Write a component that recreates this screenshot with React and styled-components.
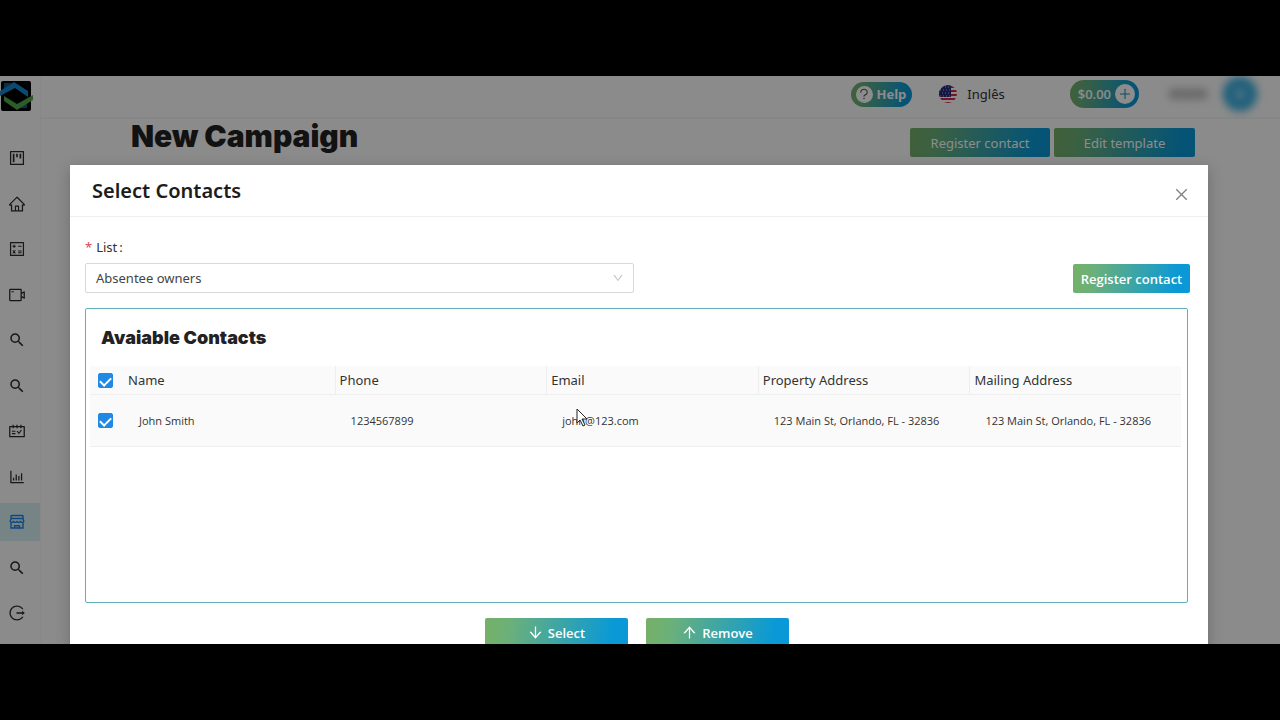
import { useState } from 'react'
import styled, { createGlobalStyle, css } from 'styled-components'
import {
	AiOutlineArrowDown,
	AiOutlineArrowUp,
	AiOutlineBarChart,
	AiOutlineCalculator,
	AiOutlineClose,
	AiOutlineDown,
	AiOutlineHome,
	AiOutlineLogout,
	AiOutlinePlus,
	AiOutlineProject,
	AiOutlineQuestion,
	AiOutlineSchedule,
	AiOutlineVideoCamera,
} from 'react-icons/ai'
import { MdSearch } from 'react-icons/md'

const GlobalStyle = createGlobalStyle`
	* {
		box-sizing: border-box;
	}
	body {
		margin: 0;
		background: #000;
		color: #333;
		font-family: 'Noto Sans', 'Open Sans', sans-serif;
		font-size: 13px;
		line-height: 20px;
	}
	button, select {
		font: inherit;
	}
	h1, h2, h3 {
		margin: 0;
	}
`

const gradient = css`
	background: linear-gradient(100deg, #76b067 0%, #6bb07a 18%, #0a99d6 88%);
`

const Frame = styled.div`
	display: flex;
	flex-direction: column;
	height: 100vh;
	padding: 76px 0;
`
const Screen = styled.div`
	position: relative;
	display: flex;
	flex: 1;
	min-height: 0;
	overflow: hidden;
	background: #fdfdfd;
`

const Sidebar = styled.aside`
	display: flex;
	flex-direction: column;
	width: 41px;
	padding: 4px 0 12px;
	border-right: 1px solid #f6f6f6;
`
const Logo = styled.svg`
	width: 34px;
	height: 32px;
	margin-bottom: 27px;
`
const Nav = styled.nav`
	display: flex;
	flex: 1;
	flex-direction: column;
	justify-content: space-between;
`
const NavLink = styled.a`
	display: flex;
	align-items: center;
	height: 38px;
	padding-left: 8px;
	font-size: 18px;
	color: ${({ $active }) => ($active ? '#1c84e8' : '#2b2b2b')};
	background: ${({ $active }) => ($active ? '#d8f1f4' : 'transparent')};
`

const Content = styled.div`
	flex: 1;
`
const TopBar = styled.header`
	display: flex;
	align-items: center;
	justify-content: flex-end;
	height: 43px;
	padding: 0 23px 5px 0;
	border-bottom: 2px solid #f5f5f5;
`
const Pill = styled.button`
	${gradient}
	display: flex;
	align-items: center;
	gap: 4px;
	height: ${({ $height }) => $height}px;
	padding: 0 ${({ $right }) => $right}px 0 ${({ $left }) => $left}px;
	border: 0;
	border-radius: 14px;
	color: #fff;
	font-family: 'Open Sans', sans-serif;
	font-weight: ${({ $weight }) => $weight};
`
const PillIcon = styled.span`
	display: grid;
	place-items: center;
	width: ${({ $size }) => $size}px;
	height: ${({ $size }) => $size}px;
	border-radius: 50%;
	background: #fff;
	color: ${({ $color }) => $color};
	font-size: 14px;
`
const Language = styled.div`
	display: flex;
	align-items: center;
	gap: 9px;
	margin: 0 65px 0 26px;
`
const User = styled.div`
	display: flex;
	align-items: center;
	gap: 16px;
	margin-left: 30px;
	filter: blur(4px);
`
const UserName = styled.span`
	width: 38px;
	height: 10px;
	background: #bbb;
`
const Avatar = styled.span`
	width: 34px;
	height: 34px;
	border-radius: 50%;
	background: radial-gradient(circle, #80cdec 12%, #2ca9dd 45%);
`
const PageHead = styled.div`
	display: flex;
	align-items: flex-start;
	justify-content: space-between;
	padding: 0 85px 0 90px;
`
const PageTitle = styled.h1`
	font-family: Inter, sans-serif;
	font-size: 30px;
	font-weight: 900;
	line-height: 34px;
	color: #222;
`
const ButtonRow = styled.div`
	display: flex;
	justify-content: ${({ $center }) => ($center ? 'center' : 'flex-end')};
	gap: ${({ $gap }) => $gap}px;
	padding-top: ${({ $top }) => $top}px;
`
const Button = styled.button`
	${gradient}
	display: flex;
	align-items: center;
	justify-content: center;
	gap: 4px;
	width: ${({ $width }) => $width}px;
	height: 29px;
	padding: 0;
	border: 0;
	border-radius: 2px;
	color: #fff;
	font-family: ${({ $light }) => ($light ? 'inherit' : "'Open Sans', sans-serif")};
	font-weight: ${({ $light }) => ($light ? 400 : 600)};
	white-space: nowrap;
	svg {
		font-size: 17px;
	}
`

const Mask = styled.div`
	position: absolute;
	inset: 0;
	padding: 89px 72px 0 70px;
	background: rgba(0, 0, 0, 0.45);
`
const Modal = styled.section`
	min-height: 100%;
	background: #fff;
	box-shadow: 0 4px 14px rgba(0, 0, 0, 0.22);
`
const ModalHead = styled.header`
	display: flex;
	align-items: center;
	justify-content: space-between;
	height: 52px;
	padding: 0 18px 0 22px;
	border-bottom: 1px solid #efefef;
`
const ModalTitle = styled.h2`
	font-size: 20px;
	font-weight: 600;
	line-height: 28px;
	color: #1c1c1c;
`
const CloseButton = styled.button`
	display: flex;
	padding: 8px 0 0;
	border: 0;
	background: none;
	color: #808080;
	font-size: 17px;
`
const ModalBody = styled.div`
	padding: 20px 20px 0 15px;
`
const FormRow = styled.div`
	display: flex;
	align-items: flex-end;
	justify-content: space-between;
	margin: 0 -2px 15px 0;
`
const Field = styled.div`
	width: 50%;
	max-width: 549px;
`
const Label = styled.label`
	display: block;
	margin-bottom: 6px;
	&::before {
		content: '*';
		margin-right: 4px;
		color: #d9485a;
	}
`
const Colon = styled.span`
	margin-left: 2px;
`
const SelectWrap = styled.div`
	display: grid;
	align-items: center;
	> * {
		grid-area: 1 / 1;
	}
	svg {
		justify-self: end;
		margin-right: 10px;
		color: #bbb;
		font-size: 12px;
		pointer-events: none;
	}
`
const Select = styled.select`
	appearance: none;
	width: 100%;
	height: 30px;
	padding: 0 10px;
	border: 1px solid #d9d9d9;
	border-radius: 2px;
	background: #fff;
	color: #444;
`
const Panel = styled.div`
	height: 295px;
	padding: 14px 6px 0 4px;
	border: 1px solid #5fb0bb;
	border-radius: 2px;
`
const PanelTitle = styled.h3`
	margin: 0 0 14px 11px;
	font-family: Inter, sans-serif;
	font-size: 18px;
	font-weight: 900;
	line-height: 29px;
	color: #222;
`
const Table = styled.table`
	width: 100%;
	table-layout: fixed;
	border-collapse: separate;
	border-spacing: 0;
	background: #fafafa;
`
const Th = styled.th`
	width: ${({ $width }) => $width || 'auto'};
	height: 29px;
	padding: 0 0 0 5px;
	border-bottom: 1px solid #efefef;
	text-align: left;
	font-weight: 400;
	color: #333;
	& + & + & {
		padding-left: 4px;
		border-left: 1px solid #eee;
	}
`
const Td = styled.td`
	height: 52px;
	padding: 0 0 0 ${({ $check }) => ($check ? 5 : 16)}px;
	border-bottom: 1px solid #efefef;
	font-family: 'Open Sans', sans-serif;
	font-size: 11px;
	white-space: nowrap;
`
const Checkbox = styled.input.attrs({ type: 'checkbox' })`
	appearance: none;
	display: block;
	width: 15px;
	height: 15px;
	margin: 0 0 0 3px;
	border: 1px solid #1f8ae6;
	border-radius: 2px;
	background: #fff;
	&:checked {
		background: #1f8ae6;
	}
	&:checked::after {
		content: '';
		display: block;
		width: 5px;
		height: 9px;
		margin: 1px auto;
		border: solid #fff;
		border-width: 0 2px 2px 0;
		transform: rotate(45deg);
	}
`
const Cursor = styled.svg`
	position: absolute;
	top: 332px;
	left: 576px;
	width: 12px;
	height: 19px;
	pointer-events: none;
`

const StoreIcon = () => (
	<svg width="18" height="18" viewBox="0 0 18 18" fill="none" stroke="currentColor" strokeWidth="1.4" aria-hidden="true">
		<rect x="3" y="2.5" width="12" height="3" rx="0.6" />
		<path d="M3 5.5L2.2 8.6c1 1 2.4 1 3.4 0 1 1 2.4 1 3.4 0 1 1 2.4 1 3.4 0 1 1 2.4 1 3.4 0L15 5.5" />
		<path d="M3 9.5V15h12V9.5M6.6 14.5v-1.7h4.8v1.7" />
	</svg>
)

const menu = [
	{ name: 'Dashboard', icon: AiOutlineProject },
	{ name: 'Home', icon: AiOutlineHome },
	{ name: 'Calculator', icon: AiOutlineCalculator },
	{ name: 'Videos', icon: AiOutlineVideoCamera },
	{ name: 'Search', icon: MdSearch },
	{ name: 'Search lists', icon: MdSearch },
	{ name: 'Schedule', icon: AiOutlineSchedule },
	{ name: 'Reports', icon: AiOutlineBarChart },
	{ name: 'Marketing', icon: StoreIcon, active: true },
	{ name: 'Search history', icon: MdSearch },
	{ name: 'Logout', icon: AiOutlineLogout },
]
const columns = ['Name', 'Phone', 'Email', 'Property Address', 'Mailing Address']
const contacts = [
	['John Smith', '1234567899', 'john@123.com', '123 Main St, Orlando, FL - 32836', '123 Main St, Orlando, FL - 32836'],
]

const BrandLogo = () => (
	<Logo viewBox="0 0 34 32" aria-hidden="true">
		<rect x="1" y="1" width="30" height="30" rx="2" fill="#000" />
		<path d="M4 3h8L4 9zM27 28h-8l8-6z" fill="#0e578b" />
		<path d="M0 16v-5L14 2l14 9v6L15 8z" fill="#1784cc" />
		<path d="M4 16l13 8 16-9v5L17 30 4 21z" fill="#51a94b" />
	</Logo>
)

const Flag = () => (
	<svg width="20" height="20" viewBox="0 0 20 20" aria-hidden="true">
		<clipPath id="round">
			<circle cx="10" cy="10" r="9" />
		</clipPath>
		<g clipPath="url(#round)">
			<path fill="#fff" d="M0 0h20v20H0z" />
			<path stroke="#d8283f" strokeWidth="2" d="M0 3h20M0 7h20M0 11h20M0 15h20M0 19h20" />
			<path fill="#272b78" d="M0 0h13v13H0z" />
			<path stroke="#b9b9e0" strokeWidth="1" strokeDasharray="1 2" d="M4 3h9M2 6h11M4 9h9M2 12h11" />
		</g>
	</svg>
)

const App = () => {
	const [checked, setChecked] = useState(true)
	const toggle = () => setChecked(!checked)

	return (
		<Frame>
			<GlobalStyle />
			<Screen>
				<Sidebar>
					<BrandLogo />
					<Nav>
						{menu.map(({ name, icon: Icon, active }) => (
							<NavLink key={name} href="#" aria-label={name} $active={active}>
								<Icon />
							</NavLink>
						))}
					</Nav>
				</Sidebar>
				<Content>
					<TopBar>
						<Pill $height={25} $left={5} $right={6} $weight={700}>
							<PillIcon $size={17} $color="#555">
								<AiOutlineQuestion />
							</PillIcon>
							Help
						</Pill>
						<Language>
							<Flag />
							Inglês
						</Language>
						<Pill $height={28} $left={8} $right={4} $weight={600}>
							$0.00
							<PillIcon $size={20} $color="#1689b5">
								<AiOutlinePlus />
							</PillIcon>
						</Pill>
						<User>
							<UserName />
							<Avatar />
						</User>
					</TopBar>
					<PageHead>
						<PageTitle>New Campaign</PageTitle>
						<ButtonRow $gap={4} $top={9}>
							<Button $width={140} $light>Register contact</Button>
							<Button $width={141} $light>Edit template</Button>
						</ButtonRow>
					</PageHead>
				</Content>
				<Mask>
					<Modal role="dialog" aria-labelledby="modal-title">
						<ModalHead>
							<ModalTitle id="modal-title">Select Contacts</ModalTitle>
							<CloseButton aria-label="Close">
								<AiOutlineClose />
							</CloseButton>
						</ModalHead>
						<ModalBody>
							<FormRow>
								<Field>
									<Label htmlFor="list">
										List<Colon>:</Colon>
									</Label>
									<SelectWrap>
										<Select id="list" defaultValue="Absentee owners">
											<option>Absentee owners</option>
										</Select>
										<AiOutlineDown />
									</SelectWrap>
								</Field>
								<Button $width={117}>Register contact</Button>
							</FormRow>
							<Panel>
								<PanelTitle>Avaiable Contacts</PanelTitle>
								<Table>
									<thead>
										<tr>
											<Th $width="33px">
												<Checkbox aria-label="Select all" checked={checked} onChange={toggle} />
											</Th>
											{columns.map((column) => (
												<Th key={column}>{column}</Th>
											))}
										</tr>
									</thead>
									<tbody>
										{contacts.map((contact) => (
											<tr key={contact[0]}>
												<Td $check>
													<Checkbox aria-label={contact[0]} checked={checked} onChange={toggle} />
												</Td>
												{contact.map((value, i) => (
													<Td key={columns[i]}>{value}</Td>
												))}
											</tr>
										))}
									</tbody>
								</Table>
							</Panel>
							<ButtonRow $center $gap={18} $top={15}>
								<Button $width={143}>
									<AiOutlineArrowDown />
									Select
								</Button>
								<Button $width={143}>
									<AiOutlineArrowUp />
									Remove
								</Button>
							</ButtonRow>
						</ModalBody>
					</Modal>
				</Mask>
				<Cursor viewBox="0 0 12 19" aria-hidden="true">
					<path d="M1 1v14l3-3 3 6 2-1-3-6h5z" fill="#fff" stroke="#222" />
				</Cursor>
			</Screen>
		</Frame>
	)
}

export default App
